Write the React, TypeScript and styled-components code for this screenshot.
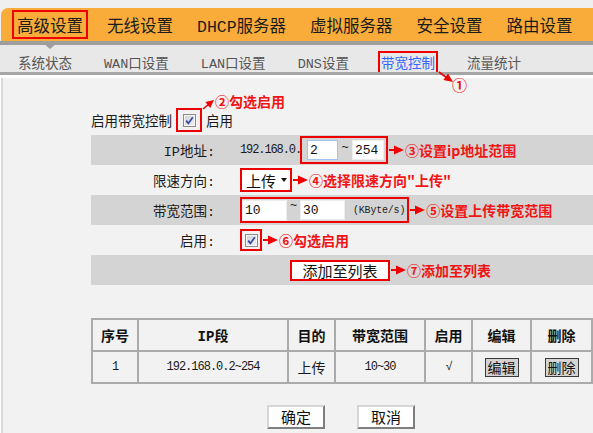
import React from "react";
import styled, { createGlobalStyle } from "styled-components";

const RED = "#EE0000";
const TEXT_RED = "#F01414";
const MONO = `"Liberation Mono", "Noto Sans CJK SC", monospace`;
const CJK = `"Noto Sans CJK SC", sans-serif`;

const GlobalStyle = createGlobalStyle`
  html, body { margin: 0; padding: 0; }
  body { background: #EFEFEF; font-family: ${MONO}; color: #1a1a1a; }
  * { box-sizing: border-box; }
`;

const Page = styled.div`
  width: 593px;
  height: 433px;
  overflow: hidden;
  padding-top: 8px;
  display: flex;
  flex-direction: column;
`;

const MainNav = styled.nav`
  display: flex;
  align-items: center;
  height: 33px;
  margin-left: 1px;
  padding-left: 11px;
  gap: 14px;
  background: #F9AC3A;
  border-top-left-radius: 7px;
`;

const MainNavItem = styled.div<{ $boxed?: boolean }>`
  height: 29px;
  padding: 0 3px;
  display: flex;
  align-items: center;
  border: 2px solid ${(p) => (p.$boxed ? RED : "transparent")};
  font-size: 16.5px;
  color: #1c1c1c;
  white-space: nowrap;
`;

const NavDivider = styled.div`
  position: relative;
  height: 4px;
  background: #9E9E9E;
`;

const Pointer = styled.span`
  position: absolute;
  left: 43px;
  top: 2px;
  width: 0;
  height: 0;
  border-left: 7px solid transparent;
  border-right: 7px solid transparent;
  border-top: 6px solid #9E9E9E;
  z-index: 1;
`;

const SubNav = styled.nav`
  display: flex;
  align-items: flex-end;
  height: 30px;
  padding-left: 15px;
  gap: 26px;
  background: #E8E8E8;
  border-bottom: 3px solid #A6A6A6;
`;

const SubNavItem = styled.div<{ $active?: boolean }>`
  position: relative;
  height: 21px;
  padding: 0 1px 2px;
  display: flex;
  align-items: center;
  border: 2px solid ${(p) => (p.$active ? RED : "transparent")};
  border-bottom: none;
  font-size: 13.5px;
  color: ${(p) => (p.$active ? "#3366FF" : "#555555")};
  white-space: nowrap;
`;

const StepOneArrow = styled.svg`
  position: absolute;
  left: 57px;
  top: 17px;
  overflow: visible;
  z-index: 3;
`;

const StepOne = styled.span`
  position: absolute;
  left: 72px;
  top: 24px;
  font: 700 15px/16px ${CJK};
  color: ${TEXT_RED};
  z-index: 3;
`;

const ContentWrap = styled.div`
  flex: 1;
  display: flex;
  background: #ffffff;
  padding: 3px 0 0 1px;
`;

const Content = styled.main`
  flex: 1;
  background: #F2F2F2;
  border-left: 2px solid #D9D9D9;
  padding: 30px 0 0 88px;
  display: flex;
  flex-direction: column;
`;

const EnableLine = styled.div`
  display: flex;
  align-items: center;
  height: 24px;
  gap: 4px;
  font-size: 13.5px;
`;

const RedFrame = styled.div<{ $w?: number; $h?: number }>`
  position: relative;
  display: flex;
  align-items: center;
  justify-content: center;
  width: ${(p) => (p.$w ? `${p.$w}px` : "auto")};
  height: ${(p) => (p.$h ? `${p.$h}px` : "auto")};
  border: 2px solid ${RED};
`;

const StepTwoArrow = styled.svg`
  position: absolute;
  left: 24px;
  top: -12px;
  overflow: visible;
`;

const StepTwo = styled.span`
  position: absolute;
  left: 37px;
  top: -17px;
  white-space: nowrap;
  font: 700 14px/16px ${CJK};
  color: ${TEXT_RED};
`;

const CheckBox = styled.span`
  width: 13px;
  height: 13px;
  border: 1px solid #8A8A8A;
  background: linear-gradient(135deg, #cfcfcf, #f3f3f3);
  box-shadow: inset 0 0 0 1px #f6f6f6;
  display: flex;
  align-items: center;
  justify-content: center;
`;

const FormGrid = styled.div`
  margin-top: 3px;
  display: flex;
  flex-direction: column;
`;

const FormRow = styled.div<{ $shaded?: boolean }>`
  display: grid;
  grid-template-columns: 149px 1fr;
  align-items: center;
  height: 30px;
  background: ${(p) => (p.$shaded ? "#D4D4D4" : "transparent")};
`;

const Label = styled.div`
  text-align: right;
  padding-right: 25px;
  font-size: 13.5px;
  color: #1a1a1a;
  white-space: nowrap;
`;

const Value = styled.div`
  display: flex;
  align-items: center;
`;

const FullCell = styled.div`
  grid-column: 1 / -1;
  display: flex;
  justify-content: center;
  padding-right: 4px;
`;

const IpPrefix = styled.span`
  font-size: 12px;
  letter-spacing: -1.1px;
  color: #1a1a1a;
  width: 60px;
`;

const RangeBox = styled(RedFrame)`
  justify-content: flex-start;
`;

const TextInput = styled.input<{ $w: number; $h?: number; $focus?: boolean }>`
  width: ${(p) => p.$w}px;
  height: ${(p) => p.$h ?? 20}px;
  padding: 0 2px;
  margin: 0;
  border: 1px solid ${(p) => (p.$focus ? "#9CC6EE" : "#EDEDED")};
  background: #ffffff;
  font: 13px ${MONO};
  color: #111;
  outline: none;
`;

const Tilde = styled.span<{ $w: number; $raise?: number }>`
  width: ${(p) => p.$w}px;
  text-align: center;
  font-size: 12px;
  position: relative;
  top: ${(p) => -(p.$raise ?? 0)}px;
`;

const Unit = styled.span`
  margin-left: 8px;
  margin-right: 2px;
  font-size: 10px;
  letter-spacing: -0.2px;
  color: #222;
`;

const SelectBox = styled.div`
  position: relative;
  display: flex;
  align-items: center;
  justify-content: space-between;
  width: 52px;
  height: 24px;
  padding: 0 3px 0 4px;
  border: 2px solid ${RED};
  background: #ffffff;
  font: 15px ${CJK};
  color: #111;
`;

const Caret = styled.span`
  width: 0;
  height: 0;
  border-left: 3.5px solid transparent;
  border-right: 3.5px solid transparent;
  border-top: 4px solid #111;
`;

const AddButton = styled.button`
  position: relative;
  width: 100px;
  height: 21px;
  padding: 0;
  border: 2px solid ${RED};
  background: #ffffff;
  font: 15px/17px ${CJK};
  color: #111;
`;

const Note = styled.span`
  position: absolute;
  left: calc(100% + 3px);
  top: 50%;
  transform: translateY(-50%);
  display: flex;
  align-items: center;
  gap: 1px;
  white-space: nowrap;
  font: 700 14px/16px ${CJK};
  color: ${TEXT_RED};
  pointer-events: none;
`;

const ListTable = styled.table`
  margin-top: 33px;
  width: 500px;
  border-collapse: collapse;
  table-layout: fixed;
  border: 2px solid #ABABAB;
`;

const Th = styled.th`
  height: 32px;
  padding: 0;
  border: 2px solid #ABABAB;
  font: 700 14px ${MONO};
  color: #111;
  text-align: center;
`;

const Td = styled.td<{ $cjk?: boolean }>`
  height: 32px;
  padding: 0;
  border: 2px solid #ABABAB;
  font-size: ${(p) => (p.$cjk ? "14px" : "12px")};
  font-family: ${(p) => (p.$cjk ? CJK : MONO)};
  letter-spacing: ${(p) => (p.$cjk ? "0" : "-1px")};
  color: #1a1a1a;
  text-align: center;
`;

const SmallButton = styled.button`
  height: 19px;
  padding: 0 2px;
  border: 1px solid #3a3a3a;
  background: #D4D4D4;
  font: 14px/15px ${CJK};
  color: #111;
`;

const ButtonBar = styled.div`
  margin-top: 21px;
  width: 500px;
  display: flex;
  justify-content: center;
  gap: 32px;
`;

const PlainButton = styled.button`
  width: 58px;
  height: 24px;
  padding: 0;
  background: #ffffff;
  border: 2px solid;
  border-color: #D6D6D6 #7E7E7E #7E7E7E #D6D6D6;
  font: 15px/18px ${CJK};
  color: #111;
`;

const Arrow = () => (
  <svg width="15" height="10" viewBox="0 0 15 10">
    <line x1="0" y1="5" x2="6" y2="5" stroke={RED} strokeWidth="2" />
    <polygon points="5,0.5 15,5 5,9.5" fill={RED} />
  </svg>
);

const Check = () => (
  <svg width="9" height="9" viewBox="0 0 9 9">
    <path d="M1.2 4.6 L3.4 7.4 L7.8 1.2" fill="none" stroke="#2D46A8" strokeWidth="1.7" />
  </svg>
);

const mainItems = ["高级设置", "无线设置", "DHCP服务器", "虚拟服务器", "安全设置", "路由设置"];
const subItems = ["系统状态", "WAN口设置", "LAN口设置", "DNS设置", "带宽控制", "流量统计"];

export default function App() {
  return (
    <>
      <GlobalStyle />
      <Page>
        <MainNav>
          {mainItems.map((t, i) => (
            <MainNavItem key={t} $boxed={i === 0}>
              {t}
            </MainNavItem>
          ))}
        </MainNav>
        <NavDivider>
          <Pointer />
        </NavDivider>
        <SubNav>
          {subItems.map((t, i) => (
            <SubNavItem key={t} $active={i === 4}>
              {t}
              {i === 4 && (
                <>
                  <StepOneArrow width="18" height="14" viewBox="0 0 18 14">
                    <line x1="2" y1="2" x2="10" y2="8" stroke={RED} strokeWidth="1.6" />
                    <polygon points="16,12 6.4,10 11,3.6" fill={RED} />
                  </StepOneArrow>
                  <StepOne>①</StepOne>
                </>
              )}
            </SubNavItem>
          ))}
        </SubNav>
        <ContentWrap>
          <Content>
            <EnableLine>
              <span>启用带宽控制</span>
              <RedFrame $w={26} $h={24}>
                <CheckBox>
                  <Check />
                </CheckBox>
                <StepTwoArrow width="14" height="13" viewBox="0 0 14 13">
                  <line x1="1" y1="11" x2="7" y2="6" stroke={RED} strokeWidth="1.6" />
                  <polygon points="12,2 8.2,9.9 3.4,4.1" fill={RED} />
                </StepTwoArrow>
                <StepTwo>②勾选启用</StepTwo>
              </RedFrame>
              <span>启用</span>
            </EnableLine>

            <FormGrid>
              <FormRow $shaded>
                <Label>IP地址:</Label>
                <Value>
                  <IpPrefix>192.168.0.</IpPrefix>
                  <RangeBox $h={28} style={{ padding: "0 2px 0 5px" }}>
                    <TextInput $w={31} $focus defaultValue="2" readOnly />
                    <Tilde $w={14} $raise={2}>~</Tilde>
                    <TextInput $w={32} defaultValue="254" readOnly />
                    <Note>
                      <Arrow />
                      ③设置ip地址范围
                    </Note>
                  </RangeBox>
                </Value>
              </FormRow>

              <FormRow>
                <Label>限速方向:</Label>
                <Value>
                  <SelectBox>
                    上传
                    <Caret />
                    <Note>
                      <Arrow />
                      ④选择限速方向"上传"
                    </Note>
                  </SelectBox>
                </Value>
              </FormRow>

              <FormRow $shaded>
                <Label>带宽范围:</Label>
                <Value>
                  <RangeBox $h={26}>
                    <TextInput $w={45} $h={21} defaultValue="10" readOnly />
                    <Tilde $w={13} $raise={4}>~</Tilde>
                    <TextInput $w={45} $h={20} defaultValue="30" readOnly />
                    <Unit>(KByte/s)</Unit>
                    <Note>
                      <Arrow />
                      ⑤设置上传带宽范围
                    </Note>
                  </RangeBox>
                </Value>
              </FormRow>

              <FormRow>
                <Label>启用:</Label>
                <Value>
                  <RedFrame $w={22} $h={22}>
                    <CheckBox>
                      <Check />
                    </CheckBox>
                    <Note>
                      <Arrow />
                      ⑥勾选启用
                    </Note>
                  </RedFrame>
                </Value>
              </FormRow>

              <FormRow $shaded>
                <FullCell>
                  <AddButton>
                    添加至列表
                    <Note>
                      <Arrow />
                      ⑦添加至列表
                    </Note>
                  </AddButton>
                </FullCell>
              </FormRow>
            </FormGrid>

            <ListTable>
              <colgroup>
                <col style={{ width: 46 }} />
                <col style={{ width: 150 }} />
                <col style={{ width: 47 }} />
                <col style={{ width: 90 }} />
                <col style={{ width: 47 }} />
                <col style={{ width: 59 }} />
                <col style={{ width: 61 }} />
              </colgroup>
              <thead>
                <tr>
                  <Th>序号</Th>
                  <Th>IP段</Th>
                  <Th>目的</Th>
                  <Th>带宽范围</Th>
                  <Th>启用</Th>
                  <Th>编辑</Th>
                  <Th>删除</Th>
                </tr>
              </thead>
              <tbody>
                <tr>
                  <Td>1</Td>
                  <Td>192.168.0.2~254</Td>
                  <Td $cjk>上传</Td>
                  <Td>10~30</Td>
                  <Td>√</Td>
                  <Td>
                    <SmallButton>编辑</SmallButton>
                  </Td>
                  <Td>
                    <SmallButton>删除</SmallButton>
                  </Td>
                </tr>
              </tbody>
            </ListTable>

            <ButtonBar>
              <PlainButton>确定</PlainButton>
              <PlainButton>取消</PlainButton>
            </ButtonBar>
          </Content>
        </ContentWrap>
      </Page>
    </>
  );
}
